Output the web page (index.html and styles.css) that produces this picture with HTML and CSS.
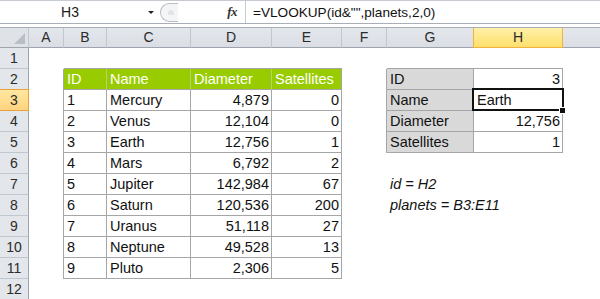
FILE: index.html
```html
<!DOCTYPE html>
<html>
<head>
<meta charset="utf-8">
<link rel="stylesheet" href="styles.css">
</head>
<body>
<div class="app">
  <div class="fbar">
    <div class="namebox"><span class="nb-text">H3</span><span class="nb-arrow"></span></div>
    <div class="fmid"><span class="knob"><span class="knob-in"></span></span><span class="fx">fx</span></div>
    <div class="finput">=VLOOKUP(id&amp;"",planets,2,0)</div>
  </div>
  <div class="fsep"></div>
  <div class="sheet">
    <!-- header -->
    <div class="corner"><span class="tri"></span></div>
    <div class="ch">A</div><div class="ch">B</div><div class="ch">C</div><div class="ch">D</div><div class="ch">E</div><div class="ch">F</div><div class="ch">G</div><div class="ch sel">H</div><div class="ch last"></div>
    <!-- row 1 -->
    <div class="rh">1</div>
    <div class="c"></div><div class="c tb"></div><div class="c tb"></div><div class="c tb"></div><div class="c tb"></div><div class="c"></div><div class="c tb"></div><div class="c tb"></div><div class="c"></div>
    <!-- row 2 -->
    <div class="rh">2</div>
    <div class="c tr"></div><div class="c hd">ID</div><div class="c hd">Name</div><div class="c hd">Diameter</div><div class="c hd hdl">Satellites</div><div class="c tr"></div><div class="c t g">ID</div><div class="c t n">3</div><div class="c"></div>
    <!-- row 3 -->
    <div class="rh rsel">3</div>
    <div class="c tr"></div><div class="c t">1</div><div class="c t">Mercury</div><div class="c t n">4,879</div><div class="c t n">0</div><div class="c tr"></div><div class="c t g">Name</div><div class="c t active">Earth<span class="handle"></span></div><div class="c"></div>
    <!-- row 4 -->
    <div class="rh">4</div>
    <div class="c tr"></div><div class="c t">2</div><div class="c t">Venus</div><div class="c t n">12,104</div><div class="c t n">0</div><div class="c tr"></div><div class="c t g">Diameter</div><div class="c t n">12,756</div><div class="c"></div>
    <!-- row 5 -->
    <div class="rh">5</div>
    <div class="c tr"></div><div class="c t">3</div><div class="c t">Earth</div><div class="c t n">12,756</div><div class="c t n">1</div><div class="c tr"></div><div class="c t g">Satellites</div><div class="c t n">1</div><div class="c"></div>
    <!-- row 6 -->
    <div class="rh">6</div>
    <div class="c tr"></div><div class="c t">4</div><div class="c t">Mars</div><div class="c t n">6,792</div><div class="c t n">2</div><div class="c"></div><div class="c"></div><div class="c"></div><div class="c"></div>
    <!-- row 7 -->
    <div class="rh">7</div>
    <div class="c tr"></div><div class="c t">5</div><div class="c t">Jupiter</div><div class="c t n">142,984</div><div class="c t n">67</div><div class="c"></div><div class="c it">id = H2</div><div class="c"></div><div class="c"></div>
    <!-- row 8 -->
    <div class="rh">8</div>
    <div class="c tr"></div><div class="c t">6</div><div class="c t">Saturn</div><div class="c t n">120,536</div><div class="c t n">200</div><div class="c"></div><div class="c it">planets = B3:E11</div><div class="c"></div><div class="c"></div>
    <!-- row 9 -->
    <div class="rh">9</div>
    <div class="c tr"></div><div class="c t">7</div><div class="c t">Uranus</div><div class="c t n">51,118</div><div class="c t n">27</div><div class="c"></div><div class="c"></div><div class="c"></div><div class="c"></div>
    <!-- row 10 -->
    <div class="rh">10</div>
    <div class="c tr"></div><div class="c t">8</div><div class="c t">Neptune</div><div class="c t n">49,528</div><div class="c t n">13</div><div class="c"></div><div class="c"></div><div class="c"></div><div class="c"></div>
    <!-- row 11 -->
    <div class="rh">11</div>
    <div class="c tr"></div><div class="c t">9</div><div class="c t">Pluto</div><div class="c t n">2,306</div><div class="c t n">5</div><div class="c"></div><div class="c"></div><div class="c"></div><div class="c"></div>
    <!-- row 12 -->
    <div class="rh">12</div>
    <div class="c"></div><div class="c"></div><div class="c"></div><div class="c"></div><div class="c"></div><div class="c"></div><div class="c"></div><div class="c"></div><div class="c"></div>
  </div>
</div>
</body>
</html>
```

FILE: styles.css
```css
html, body { margin: 0; padding: 0; background: #fff; }
.app { width: 600px; height: 299px; overflow: hidden; font-family: "Liberation Sans", Arial, sans-serif; }

.fbar { display: flex; height: 23px; border-top: 1px solid #c6cbd2; box-sizing: border-box; background: #fff; }
.namebox { width: 159px; display: flex; align-items: center; position: relative; }
.nb-text { width: 140px; text-align: center; font-size: 14px; color: #1a1a1a; }
.nb-arrow { width: 0; height: 0; border-left: 3px solid transparent; border-right: 3px solid transparent; border-top: 3px solid #222; margin-left: 8px; }
.fmid { width: 86px; display: flex; align-items: center; position: relative; background: #fff; }
.knob { width: 18px; height: 19px; border: 1px solid #b9bec5; border-right: none; border-radius: 10px 0 0 10px; background: #f4f5f7; display: flex; align-items: center; justify-content: center; box-sizing: border-box; margin-left: 1px; }
.knob-in { width: 6px; height: 5px; background: #e2e4e7; border-radius: 3px 3px 1px 1px; margin-left: 3px; }
.fx { margin-left: auto; margin-right: 8px; font-family: "Liberation Serif", serif; font-style: italic; font-weight: bold; font-size: 13px; color: #333; letter-spacing: -0.5px; }
.finput { flex: 1; border-left: 1px solid #c6cbd2; padding-left: 7px; font-size: 13.6px; color: #111; display: flex; align-items: center; }

.fsep { height: 5px; border-top: 1px solid #a9afb7; border-bottom: 1px solid #a9afb7; box-sizing: border-box; background: #fff; }

.sheet { display: grid; grid-template-columns: 29px 35px 43px 84px 81px 70px 45px 87px 89px 1fr; grid-template-rows: 20px repeat(12, 21px); }
.sheet > div { box-sizing: border-box; overflow: visible; white-space: nowrap; }

.corner { background: #dfe3e8; border-right: 1px solid #c2c7ce; border-bottom: 1px solid #9ea5ae; position: relative; }
.tri { position: absolute; right: 3px; bottom: 3px; width: 0; height: 0; border-left: 11px solid transparent; border-bottom: 11px solid #b9bec6; }
.ch { background: linear-gradient(#e4e7ec, #dadee4); border-right: 1px solid #c2c7ce; border-bottom: 1px solid #9ea5ae; text-align: center; font-size: 14px; line-height: 19px; color: #2b2b2b; }
.ch.last { border-right: none; }
.ch.sel { background: linear-gradient(#fff0a8, #ffdf6c); border-right: 1px solid #f2b23e; border-left: 1px solid #f2b23e; border-bottom: 1px solid #f2b23e; margin-left: -1px; }
.rh { background: #e3e6ea; border-right: 1px solid #9ea5ae; border-bottom: 1px solid #c2c7ce; text-align: center; font-size: 14px; line-height: 20px; color: #2b2b2b; }
.rh.rsel { background: linear-gradient(#ffe7a0, #ffd480); border-right: 1px solid #e9a23b; border-bottom: 1px solid #e9a23b; border-top: 1px solid #e9a23b; margin-top: -1px; line-height: 20px; }

.c { font-size: 14.5px; line-height: 21px; color: #111; padding: 0 2px 0 3px; }
.t { border-right: 1px solid #a6a6a6; border-bottom: 1px solid #a6a6a6; }
.tb { border-bottom: 1px solid #a6a6a6; }
.tr { border-right: 1px solid #a6a6a6; }
.n { text-align: right; }
.hd { background: #99cc00; color: #fff; border-right: 1px solid #b9d36a; border-bottom: 1px solid #a6a6a6; }
.hd.hdl { border-right: 1px solid #a6a6a6; }
.g { background: #d9d9d9; }
.it { font-style: italic; padding-left: 3px; }
.active { position: relative; }
.active::after { content: ""; position: absolute; left: -2px; top: -2px; right: -2px; bottom: -1px; border: 2px solid #111; pointer-events: none; }
.handle { position: absolute; right: -4px; bottom: -4px; width: 5px; height: 5px; background: #111; border: 1px solid #fff; z-index: 2; }
```
